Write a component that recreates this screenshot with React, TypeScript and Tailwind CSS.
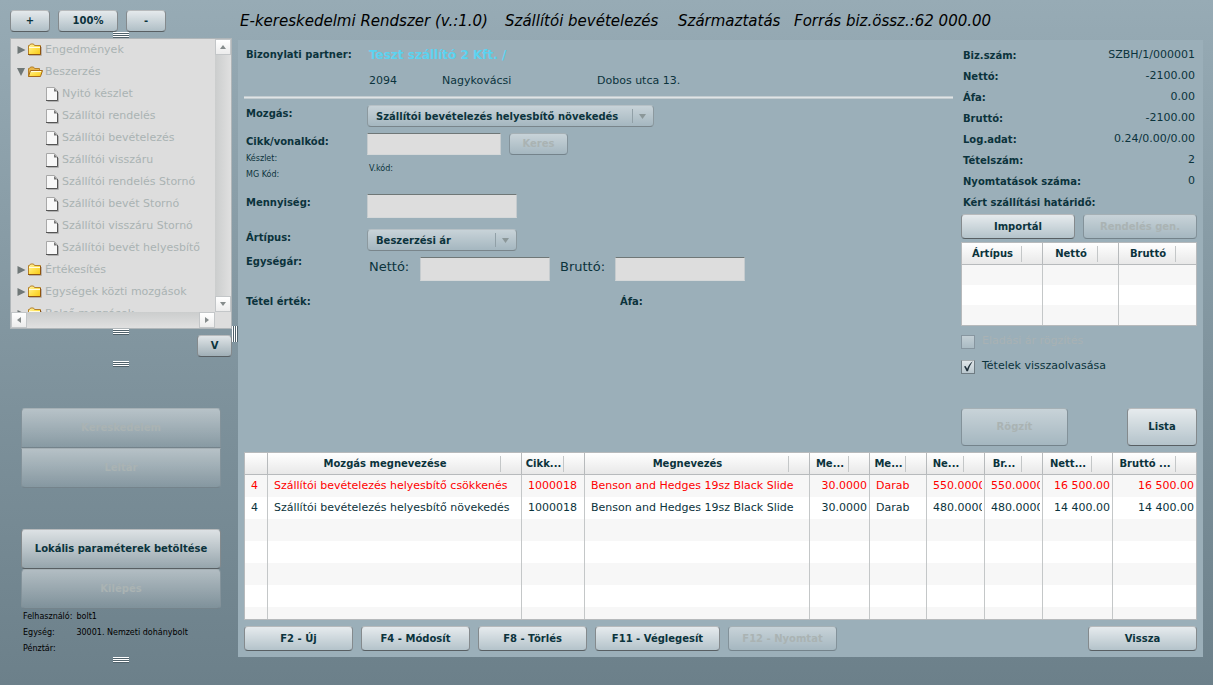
import type { ButtonHTMLAttributes, InputHTMLAttributes, ReactNode, SelectHTMLAttributes } from "react";
import clsx from "clsx";

function Button({ className, disabled, ...rest }: ButtonHTMLAttributes<HTMLButtonElement>) {
  return (
    <button
      type="button"
      disabled={disabled}
      className={clsx(
        "rounded border bg-linear-to-b text-center text-[10px] font-bold leading-4 whitespace-nowrap",
        disabled
          ? "border-x-[#83929a] border-t-[#a5b0b5] border-b-[#74838b] from-white/45 to-white/10 text-[#aab3b3]"
          : "border-x-[#848a8d] border-t-[#b7babc] border-b-[#585f63] from-white/75 to-white/25",
        className,
      )}
      {...rest}
    />
  );
}

function TextBox({ className, ...rest }: InputHTMLAttributes<HTMLInputElement>) {
  return (
    <input
      type="text"
      className={clsx("border border-x-[#c5cbce] border-t-[#6f7777] border-b-[#d5d8d9] bg-[#dddddd] px-1", className)}
      {...rest}
    />
  );
}

function Dropdown({ className, children, ...rest }: SelectHTMLAttributes<HTMLSelectElement>) {
  return (
    <div className={clsx("relative", className)}>
      <select
        className="h-[22px] w-full appearance-none rounded border border-x-[#8c999f] border-t-[#b7c1c6] border-b-[#79858b] bg-linear-to-b from-white/45 to-white/10 pr-6 pl-2 text-[10px] font-bold"
        {...rest}
      >
        {children}
      </select>
      <svg className="pointer-events-none absolute top-1 right-2 h-[14px] w-[14px]" viewBox="0 0 14 14" aria-hidden="true">
        <path d="M0.5 0v14" transform="translate(-6 0)" stroke="#91a0a7" />
        <path d="M7 5h7l-3.500 5z" fill="#8b9799" />
        <path d="M0.5 0v14" stroke="#91a0a7" />
      </svg>
    </div>
  );
}

function Grip() {
  return <div className="h-[6px] w-4 self-center bg-[repeating-linear-gradient(180deg,#ffffff_0_1px,#4f616a_1px_2px)]" />;
}

function TreeArrow({ open }: { open?: boolean }) {
  return (
    <svg className="ml-[5px] h-[10px] w-[10px]" viewBox="0 0 10 10" aria-hidden="true">
      <path d={open ? "M1 1h8L5 9z" : "M1.500 1v8l8-4z"} fill="#6f7777" />
    </svg>
  );
}

function FolderIcon({ open }: { open?: boolean }) {
  return (
    <svg className="ml-px h-[14px] w-4" viewBox="0 0 16 14" aria-hidden="true">
      <defs>
        <linearGradient id="folderFill" x1="0" y1="0" x2="1" y2="1">
          <stop offset="0" stopColor="#fff3a8" />
          <stop offset="0.5" stopColor="#ffe14d" />
          <stop offset="1" stopColor="#f7c815" />
        </linearGradient>
      </defs>
      {open ? (
        <>
          <path d="M1.500 11.500V3.500h1l1-1.500h3l1 1.500h5V6" fill="#e8b64a" stroke="#b5802a" />
          <path d="M3.500 5.500h12l-2 6h-12z" fill="url(#folderFill)" stroke="#a5691b" />
          <path d="M4 6.500h10" stroke="#fffbe0" />
        </>
      ) : (
        <>
          <path d="M2 12.500h12.500V4" fill="none" stroke="#b8b0a8" />
          <path d="M1.500 11.500v-9h1l1-1.500h3l1 1.500h6v9z" fill="url(#folderFill)" stroke="#b5802a" />
          <path d="M1 11.500h12.500V3" fill="none" stroke="#8f5410" />
          <path d="M2 4.500h11" stroke="#fffbe0" />
        </>
      )}
    </svg>
  );
}

function PageIcon() {
  return (
    <svg className="h-[15px] w-[14px]" viewBox="0 0 14 15" aria-hidden="true">
      <path d="M1.500 14.500h11V5" fill="none" stroke="#b0b0b0" />
      <path d="M0.500 0.500h8l3 3.500v9.500H0.500z" fill="#f8f8f8" stroke="#a8a8a8" />
      <path d="M0 13.500h11.500V4" fill="none" stroke="#555555" />
      <path d="M8 1v3.500h3.500z" fill="#777777" />
    </svg>
  );
}

function Folder({ name, open, children }: { name: string; open?: boolean; children?: ReactNode }) {
  return (
    <li>
      <div className="flex h-[22px] items-center">
        <TreeArrow open={open} />
        <FolderIcon open={open} />
        <span className="ml-[2px]">{name}</span>
      </div>
      {children}
    </li>
  );
}

const purchaseItems = [
  "Nyitó készlet",
  "Szállítói rendelés",
  "Szállítói bevételezés",
  "Szállítói visszáru",
  "Szállítói rendelés Stornó",
  "Szállítói bevét Stornó",
  "Szállítói visszáru Stornó",
  "Szállítói bevét helyesbítő",
];

function ScrollButton({ label, d }: { label: string; d: string }) {
  return (
    <button
      type="button"
      aria-label={label}
      className="flex h-4 w-4 shrink-0 items-center justify-center border border-[#c3c6c8] bg-linear-to-b from-white to-[#ececec]"
    >
      <svg className="h-[6px] w-[6px]" viewBox="0 0 6 6" aria-hidden="true">
        <path d={d} fill="#858b8b" />
      </svg>
    </button>
  );
}

function NavigationTree() {
  return (
    <nav className="grid h-[291px] grid-cols-[1fr_16px] grid-rows-[1fr_16px] border border-[#b0b6b9] bg-[#dddddd] text-[#aab3b3]">
      <ul className="overflow-hidden whitespace-nowrap">
        <Folder name="Engedmények" />
        <Folder name="Beszerzés" open>
          <ul>
            {purchaseItems.map((item) => (
              <li key={item} className="flex h-[22px] items-center gap-[2px] pl-[35px]">
                <PageIcon />
                {item}
              </li>
            ))}
          </ul>
        </Folder>
        <Folder name="Értékesítés" />
        <Folder name="Egységek közti mozgások" />
        <Folder name="Belső mozgások" />
      </ul>
      <div className="flex flex-col justify-between bg-linear-to-r from-[#cbcdcd] to-[#e0e0e0]">
        <ScrollButton label="Fel" d="M0 5h6L3 1z" />
        <ScrollButton label="Le" d="M0 1h6L3 5z" />
      </div>
      <div className="flex justify-between bg-linear-to-b from-[#cbcdcd] to-[#e0e0e0]">
        <ScrollButton label="Balra" d="M5 0v6L1 3z" />
        <ScrollButton label="Jobbra" d="M1 0v6l4-3z" />
      </div>
      <div />
    </nav>
  );
}

function Sidebar() {
  return (
    <aside className="flex w-[238px] shrink-0 items-center pt-[10px] pb-[22px] pl-[10px]">
      <div className="flex w-[222px] flex-col self-start">
        <div className="flex gap-2">
          <Button className="h-[22px] w-10">+</Button>
          <Button className="h-[22px] w-[60px]">100%</Button>
          <Button className="h-[22px] w-10">-</Button>
        </div>
        <Grip />
        <NavigationTree />
        <Grip />
        <Button className="h-[22px] w-[35px] self-end">V</Button>
        <div className="mt-1 flex flex-col">
          <Grip />
        </div>
        <div className="mt-[41px] flex flex-col px-[11px]">
          <Button disabled className="h-10 rounded-b-none">Kereskedelem</Button>
          <Button disabled className="h-10 rounded-t-none">Leltár</Button>
          <Button className="mt-[41px] h-10">Lokális paraméterek betöltése</Button>
          <Button disabled className="h-10">Kilépés</Button>
        </div>
        <dl className="grid grid-cols-[auto_1fr] gap-x-1 pl-[13px] text-[8px] leading-4 text-black">
          <dt>Felhasználó:</dt>
          <dd>bolt1</dd>
          <dt>Egység:</dt>
          <dd>30001. Nemzeti dohánybolt</dd>
          <dt>Pénztár:</dt>
          <dd />
        </dl>
        <Grip />
      </div>
      <div className="mb-[6px] h-4 w-[6px] bg-[repeating-linear-gradient(90deg,#ffffff_0_1px,#4f616a_1px_2px)]" />
    </aside>
  );
}

function FormRow({ label, htmlFor, className, children }: { label: string; htmlFor?: string; className?: string; children?: ReactNode }) {
  return (
    <div className={clsx("grid grid-cols-[121px_1fr] items-start pl-[2px]", className)}>
      <label htmlFor={htmlFor} className="text-[10px] leading-[18px] font-bold">{label}</label>
      {children}
    </div>
  );
}

function ItemForm() {
  return (
    <form className="min-w-0 flex-1 pt-[6px]">
      <FormRow label="Bizonylati partner:">
        <div className="pl-[2px] text-[12px] leading-[18px] font-bold text-[#5bd3f0]">Teszt szállító 2 Kft. /</div>
      </FormRow>
      <div className="mt-2 flex pl-[125px] leading-[18px]">
        <span className="w-[73px]">2094</span>
        <span className="w-[155px]">Nagykovácsi</span>
        <span>Dobos utca 13.</span>
      </div>
      <hr className="mt-[6px] h-[3px] border-y border-[#c3ccd0] bg-[#dfe4e6]" />
      <FormRow label="Mozgás:" htmlFor="movement" className="mt-[6px]">
        <Dropdown id="movement" className="w-[287px]">
          <option>Szállítói bevételezés helyesbítő növekedés</option>
        </Dropdown>
      </FormRow>
      <div className="mt-[6px] grid grid-cols-[121px_1fr] pl-[2px]">
        <div className="flex flex-col">
          <label htmlFor="item" className="text-[10px] leading-[18px] font-bold">Cikk/vonalkód:</label>
          <span className="text-[8px] leading-4">Készlet:</span>
          <span className="text-[8px] leading-4">MG Kód:</span>
        </div>
        <div>
          <div className="flex gap-2">
            <TextBox id="item" className="h-[22px] w-[134px]" />
            <Button disabled className="h-[22px] w-[59px]">Keres</Button>
          </div>
          <div className="mt-[6px] pl-[2px] text-[8px] leading-4">V.kód:</div>
        </div>
      </div>
      <FormRow label="Mennyiség:" htmlFor="quantity" className="mt-[11px]">
        <TextBox id="quantity" className="h-6 w-[150px]" />
      </FormRow>
      <FormRow label="Ártípus:" htmlFor="priceType" className="mt-[11px]">
        <Dropdown id="priceType" className="w-[150px]">
          <option>Beszerzési ár</option>
        </Dropdown>
      </FormRow>
      <FormRow label="Egységár:" htmlFor="net" className="mt-[2px]">
        <div className="flex pt-1 pl-[2px] text-[13px] leading-5">
          <label htmlFor="net" className="w-[51px]">Nettó:</label>
          <TextBox id="net" className="h-6 w-[130px]" />
          <label htmlFor="gross" className="ml-[10px] w-[55px]">Bruttó:</label>
          <TextBox id="gross" className="h-6 w-[130px]" />
        </div>
      </FormRow>
      <FormRow label="Tétel érték:" className="mt-3">
        <div className="pl-[253px] text-[10px] leading-[18px] font-bold">Áfa:</div>
      </FormRow>
    </form>
  );
}

const summary = [
  ["Biz.szám:", "SZBH/1/000001"],
  ["Nettó:", "-2100.00"],
  ["Áfa:", "0.00"],
  ["Bruttó:", "-2100.00"],
  ["Log.adat:", "0.24/0.00/0.00"],
  ["Tételszám:", "2"],
  ["Nyomtatások száma:", "0"],
  ["Kért szállítási határidő:", ""],
];

function HeaderCell({ children }: { children?: ReactNode }) {
  return (
    <th className="border-r border-b border-[#b7babc] bg-linear-to-b from-white to-[#e8e8e8] p-0 text-[10px] font-bold last:border-r-0">
      <div className="flex h-[21px] items-center pr-[20px]">
        <span className="min-w-0 flex-1 overflow-hidden pl-[2px] text-center whitespace-nowrap">{children}</span>
        <span className="h-4 w-px bg-[#c4c7c8]" />
      </div>
    </th>
  );
}

function CheckBox({ id, label, disabled, defaultChecked }: { id: string; label: string; disabled?: boolean; defaultChecked?: boolean }) {
  return (
    <div className="flex h-[25px] items-center gap-[7px]">
      <span className="relative h-[14px] w-[14px]">
        <input
          id={id}
          type="checkbox"
          disabled={disabled}
          defaultChecked={defaultChecked}
          className="peer block h-[14px] w-[14px] appearance-none border border-[#6f7c83] border-t-[#a5adb0] bg-linear-to-b from-white/70 to-white/30 disabled:border-[#8796a0] disabled:from-white/40 disabled:to-white/15"
        />
        <svg className="pointer-events-none absolute inset-0 hidden h-[14px] w-[14px] peer-checked:block" viewBox="0 0 14 14" aria-hidden="true">
          <path d="M3 6.500l1.500-.5 1.700 2.700C7.500 5.500 9 3 11.800 1.300 9.500 4.500 8.200 7.500 7 11.300H5.500C4.900 9.500 4 8 3 6.500z" fill="#20303a" />
        </svg>
      </span>
      <label htmlFor={id} className={clsx(disabled && "text-[#a9b2b4]")}>{label}</label>
    </div>
  );
}

function SummaryPanel() {
  return (
    <section className="flex w-[236px] shrink-0 flex-col pt-[5px]">
      <dl className="px-[2px]">
        {summary.map(([name, value]) => (
          <div key={name} className="flex h-[21px] items-center justify-between">
            <dt className="text-[10px] font-bold">{name}</dt>
            <dd>{value}</dd>
          </div>
        ))}
      </dl>
      <div className="mt-px grid grid-cols-2 gap-2">
        <Button className="h-[25px]">Importál</Button>
        <Button disabled className="h-[25px]">Rendelés gen.</Button>
      </div>
      <div className="mt-[3px] border border-[#b7babc] bg-white">
        <table className="w-full table-fixed border-separate border-spacing-0">
          <colgroup>
            <col className="w-[81px]" />
            <col className="w-[76px]" />
            <col />
          </colgroup>
          <thead>
            <tr>
              <HeaderCell>Ártípus</HeaderCell>
              <HeaderCell>Nettó</HeaderCell>
              <HeaderCell>Bruttó</HeaderCell>
            </tr>
          </thead>
          <tbody>
            {[0, 1, 2].map((row) => (
              <tr key={row} className="h-5 odd:bg-[#f7f7f7]">
                <td className="border-r border-[#c4c7c8]" />
                <td className="border-r border-[#c4c7c8]" />
                <td />
              </tr>
            ))}
          </tbody>
        </table>
      </div>
      <div className="mt-[3px]">
        <CheckBox id="salePrice" label="Eladási ár rögzítés" disabled />
        <CheckBox id="readBack" label="Tételek visszaolvasása" defaultChecked />
      </div>
      <div className="mt-[29px] flex justify-between">
        <Button disabled className="h-[38px] w-[107px]">Rögzít</Button>
        <Button className="h-[38px] w-[70px]">Lista</Button>
      </div>
    </section>
  );
}

const headers = ["", "Mozgás megnevezése", "Cikk...", "Megnevezés", "Me...", "Me...", "Ne...", "Br...", "Nett...", "Bruttó ..."];
const items = [
  ["4", "Szállítói bevételezés helyesbítő csökkenés", "1000018", "Benson and Hedges 19sz Black Slide", "30.0000", "Darab", "550.0000", "550.0000", "16 500.00", "16 500.00"],
  ["4", "Szállítói bevételezés helyesbítő növekedés", "1000018", "Benson and Hedges 19sz Black Slide", "30.0000", "Darab", "480.0000", "480.0000", "14 400.00", "14 400.00"],
];
const blankRow = headers.map(() => "");
const rows = [...items, blankRow, blankRow, blankRow, blankRow, blankRow];

function ItemsTable() {
  return (
    <div className="mt-[6px] h-[168px] overflow-hidden border border-[#b7babc] bg-white">
      <table className="w-full table-fixed border-separate border-spacing-0">
        <colgroup>
          <col className="w-[23px]" />
          <col className="w-[254px]" />
          <col className="w-[63px]" />
          <col className="w-[225px]" />
          <col className="w-[60px]" />
          <col className="w-[57px]" />
          <col className="w-[58px]" />
          <col className="w-[58px]" />
          <col className="w-[70px]" />
          <col />
        </colgroup>
        <thead>
          <tr>
            {headers.map((header, i) => (
              <HeaderCell key={i}>{header}</HeaderCell>
            ))}
          </tr>
        </thead>
        <tbody>
          {rows.map((row, r) => (
            <tr key={r} className={clsx("h-[22px] odd:bg-[#f7f7f7]", r === 0 && "text-[#ff0000]")}>
              {row.map((cell, c) => (
                <td key={c} className="border-r border-[#c4c7c8] py-0 pr-[2px] pl-[6px] last:border-r-0">
                  <div className={clsx("overflow-hidden whitespace-nowrap", (c === 4 || c > 7) && "text-right")}>{cell}</div>
                </td>
              ))}
            </tr>
          ))}
        </tbody>
      </table>
    </div>
  );
}

export default function App() {
  return (
    <div className="flex min-h-screen bg-linear-to-b from-[#97abb5] to-[#6c808a] font-['Verdana','DejaVu_Sans',sans-serif] text-[11px] text-[#0b333c]">
      <Sidebar />
      <div className="min-w-0 flex-1 pr-[10px] pb-7">
        <h1 className="flex h-10 items-center pt-[2px] pl-[2px] text-[15px] whitespace-nowrap text-black italic">
          <span className="w-[265px]">E-kereskedelmi Rendszer (v.:1.0)</span>
          <span className="w-[173px]">Szállítói bevételezés</span>
          <span className="w-[116px]">Származtatás</span>
          <span>Forrás biz.össz.:62 000.00</span>
        </h1>
        <main className="bg-[#9bafb9] px-[6px] pb-[6px]">
          <div className="flex gap-2">
            <ItemForm />
            <SummaryPanel />
          </div>
          <ItemsTable />
          <div className="mt-[6px] flex gap-2">
            <Button className="h-[25px] w-[109px]">F2 - Új</Button>
            <Button className="h-[25px] w-[109px]">F4 - Módosít</Button>
            <Button className="h-[25px] w-[109px]">F8 - Törlés</Button>
            <Button className="h-[25px] w-[125px]">F11 - Véglegesít</Button>
            <Button disabled className="h-[25px] w-[109px]">F12 - Nyomtat</Button>
            <Button className="ml-auto h-[25px] w-[109px]">Vissza</Button>
          </div>
        </main>
      </div>
    </div>
  );
}
